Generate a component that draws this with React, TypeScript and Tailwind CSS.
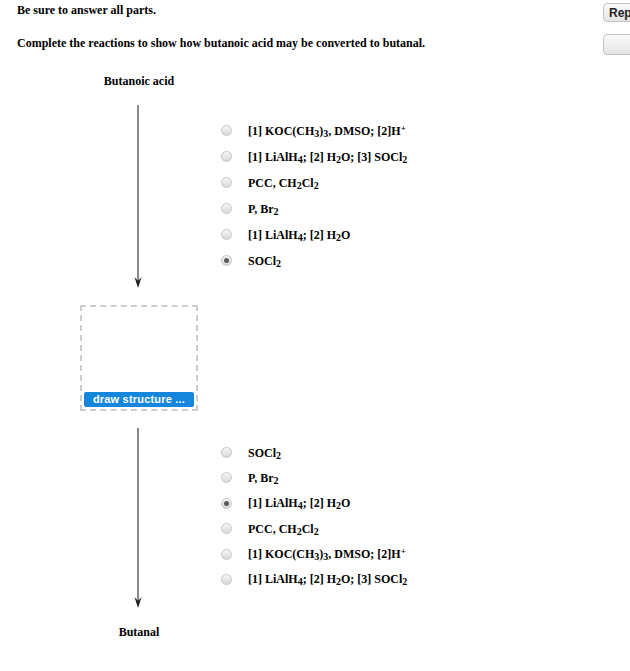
import React from "react";

const serif = { fontFamily: '"Liberation Serif", "Times New Roman", serif' };

function Radio({ checked }: { checked?: boolean }) {
  return (
    <span className="w-[11px] h-[11px] shrink-0 rounded-full border border-[#c6c6c6] bg-linear-to-b from-[#f6f6f6] to-[#d8d8d8] flex items-center justify-center">
      {checked && <span className="w-[5px] h-[5px] rounded-full bg-[#5a5a5a]" />}
    </span>
  );
}

const S = ({ children }: { children: React.ReactNode }) => (
  <sub className="text-[10px] relative top-[2px] align-baseline">{children}</sub>
);
const Sup = ({ children }: { children: React.ReactNode }) => (
  <sup className="text-[9px] relative -top-[4px] align-baseline">{children}</sup>
);

const reagents: Record<string, React.ReactNode> = {
  koc: (
    <>
      [1] KOC(CH<S>3</S>)<S>3</S>, DMSO; [2]H<Sup>+</Sup>
    </>
  ),
  lialhSocl: (
    <>
      [1] LiAlH<S>4</S>; [2] H<S>2</S>O; [3] SOCl<S>2</S>
    </>
  ),
  pcc: (
    <>
      PCC, CH<S>2</S>Cl<S>2</S>
    </>
  ),
  pbr: (
    <>
      P, Br<S>2</S>
    </>
  ),
  lialh: (
    <>
      [1] LiAlH<S>4</S>; [2] H<S>2</S>O
    </>
  ),
  socl: (
    <>
      SOCl<S>2</S>
    </>
  ),
};

function Options({ keys, selected, rowH }: { keys: string[]; selected: string; rowH: string }) {
  return (
    <div className="flex flex-col">
      {keys.map((k) => (
        <div key={k} className={`flex items-center gap-[16px] ${rowH}`}>
          <Radio checked={k === selected} />
          <span className="text-[12px] font-bold text-black leading-none" style={serif}>
            {reagents[k]}
          </span>
        </div>
      ))}
    </div>
  );
}

function Arrow({ height }: { height: number }) {
  return (
    <svg width="12" height={height} viewBox={`0 0 12 ${height}`}>
      <line x1="6" y1="0" x2="6" y2={height - 6} stroke="#6b6b6b" strokeWidth="1.6" />
      <path d={`M2.5 ${height - 11} L6 ${height - 7} L9.5 ${height - 11} L6 ${height} Z`} fill="#1a1a1a" />
    </svg>
  );
}

function GrayButton({ label, h }: { label?: string; h: string }) {
  return (
    <div
      className={`w-[60px] ${h} rounded-[4px] border border-[#c4c4c4] bg-linear-to-b from-[#fafafa] to-[#e4e4e4] flex items-center pl-[5px] text-[12px] font-bold text-[#222]`}
      style={{ fontFamily: '"Liberation Sans", Arial, sans-serif' }}
    >
      {label}
    </div>
  );
}

export default function App() {
  return (
    <div className="w-[630px] h-[671px] overflow-hidden bg-white flex flex-col text-black" style={serif}>
      <div className="flex h-[74px]">
        <div className="flex-1 pl-[17px] pt-[3px] text-[12px] font-bold leading-[14px]">
          <p>Be sure to answer all parts.</p>
          <p className="mt-[19px]">Complete the reactions to show how butanoic acid may be converted to butanal.</p>
        </div>
        <div className="w-[27px] shrink-0 pt-[3px] flex flex-col gap-[12px]">
          <GrayButton label="Rep" h="h-[19px]" />
          <GrayButton h="h-[21px]" />
        </div>
      </div>

      <div className="w-[278px] text-center text-[12px] font-bold leading-[14px]">Butanoic acid</div>

      <div className="flex items-center mt-[17px] h-[183px]">
        <div className="w-[221px] shrink-0 pl-[132px] flex">
          <Arrow height={183} />
        </div>
        <div className="-mt-[2px]">
          <Options keys={["koc", "lialhSocl", "pcc", "pbr", "lialh", "socl"]} selected="socl" rowH="h-[26px]" />
        </div>
      </div>

      <div className="ml-[80px] mt-[17px] w-[118px] h-[106px] border-2 border-dashed border-[#cdcdcd] flex flex-col justify-end p-[2px]">
        <div
          className="h-[15px] rounded-[2px] bg-[#1487dc] text-white text-[11px] font-bold flex items-center justify-center leading-none tracking-[0.2px]"
          style={{ fontFamily: '"Liberation Sans", Arial, sans-serif' }}
        >
          draw structure ...
        </div>
      </div>

      <div className="flex items-center mt-[17px] h-[180px]">
        <div className="w-[221px] shrink-0 pl-[132px] flex">
          <Arrow height={180} />
        </div>
        <div className="-mt-[4px]">
          <Options keys={["socl", "pbr", "lialh", "pcc", "koc", "lialhSocl"]} selected="lialh" rowH="h-[25.4px]" />
        </div>
      </div>

      <div className="w-[278px] mt-[17px] text-center text-[12px] font-bold leading-[14px]">Butanal</div>
    </div>
  );
}
